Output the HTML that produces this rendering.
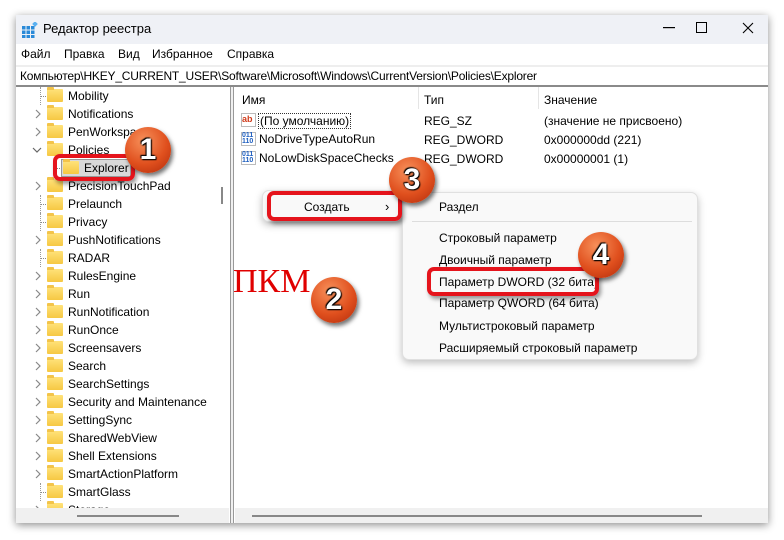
<!DOCTYPE html>
<html><head><meta charset="utf-8"><style>
*{margin:0;padding:0;box-sizing:border-box}
body{width:784px;height:540px;background:#fff;position:relative;overflow:hidden;font-family:"Liberation Sans",sans-serif;font-size:12px;color:#000}
.win{position:absolute;left:16px;top:15px;width:752px;height:508px;background:#fff;box-shadow:0 2px 8px rgba(0,0,0,.45)}
.title{position:absolute;left:0;top:0;width:752px;height:29px;background:#eff1f6}
.title span{position:absolute;left:27px;top:6px;font-size:13px}
.menu{position:absolute;top:29px;left:0;width:752px;height:20px;background:#fff}
.menu span{position:absolute;top:3px}
.addr{position:absolute;top:50px;left:0;width:752px;height:20px;background:#fff;border-top:2px solid #eee;font-size:12px;padding:2px 4px;letter-spacing:-.2px}
.sep{position:absolute;top:70px;left:0;width:752px;height:2px;background:#8a8a8a}
.row{position:absolute;height:18px;left:0;width:213px}
.row .t{position:absolute;left:52px;top:2px}
.fold{position:absolute;left:31px;top:2px;width:16px;height:13px;background:linear-gradient(#ffe27a,#f6c843);border-radius:1px}
.fold:before{content:"";position:absolute;left:0;top:-2px;width:7px;height:3px;background:#f3c44a;border-radius:1px 1px 0 0}
.chev{position:absolute;left:18px;top:4px}
.dot{position:absolute;left:24px;top:9px;width:6px;border-top:1px dotted #888}
.split{position:absolute;left:214px;top:72px;width:4px;height:436px;border-left:1px solid #999;border-right:1px solid #999;background:#f0f0f0}
.right{position:absolute;left:218px;top:72px;width:534px;height:421px;background:#fff}
.bot{position:absolute;top:493px;height:15px;background:#f0f0f0}
.bar{position:absolute;top:7px;height:2px;background:#888}
.badge{position:absolute;width:46px;height:46px;border-radius:50%;background:radial-gradient(circle at 40% 30%,#f7905a,#e0501e 55%,#b02a0a);box-shadow:2px 3px 4px rgba(0,0,0,.55);color:#fff;font:bold 30px "Liberation Sans",sans-serif;text-align:center;line-height:46px;text-shadow:0 0 2px #000,1px 1px 1px #000,-1px -1px 1px #000}
.rbox{position:absolute;border:4px solid #e5141c;border-radius:7px;box-shadow:2px 3px 4px rgba(0,0,0,.4)}
.ctx{position:absolute;background:#f9f9f9;border:1px solid #e0e0e0;border-radius:7px;box-shadow:0 3px 8px rgba(0,0,0,.25)}
#rows{position:absolute;left:0;top:87px;width:229px;height:421px;overflow:hidden}
</style></head><body>
<div class="win">
<div class="title">
<svg style="position:absolute;left:6px;top:7px" width="16" height="16"><g fill="#2a8ad8"><rect x="0" y="4" width="3.5" height="3.5"/><rect x="4.5" y="4" width="3.5" height="3.5"/><rect x="9" y="4" width="3.5" height="3.5"/><rect x="0" y="8.5" width="3.5" height="3.5"/><rect x="4.5" y="8.5" width="3.5" height="3.5"/><rect x="9" y="8.5" width="3.5" height="3.5"/><rect x="0" y="13" width="3.5" height="3"/><rect x="4.5" y="13" width="3.5" height="3"/><rect x="9" y="13" width="3.5" height="3"/></g><rect x="11" y="0" width="4" height="4" fill="#5ab0f0" transform="rotate(45 13 2)"/></svg>
<span>Редактор реестра</span>
<svg style="position:absolute;left:647px;top:12px" width="12" height="2"><rect width="12" height="1.2" fill="#000"/></svg>
<svg style="position:absolute;left:680px;top:7px" width="12" height="12"><rect x=".5" y=".5" width="10" height="10" fill="none" stroke="#000"/></svg>
<svg style="position:absolute;left:726px;top:7px" width="12" height="12"><path d="M1 1L11 11M11 1L1 11" stroke="#000" stroke-width="1.1"/></svg>
</div>
<div class="menu"><span style="left:5px">Файл</span><span style="left:48px">Правка</span><span style="left:102px">Вид</span><span style="left:136px">Избранное</span><span style="left:211px">Справка</span></div>
<div class="addr">Компьютер\HKEY_CURRENT_USER\Software\Microsoft\Windows\CurrentVersion\Policies\Explorer</div>
<div class="sep"></div>
<div class="split"></div>
<div class="right">
<div style="position:absolute;left:8px;top:6px">Имя</div>
<div style="position:absolute;left:184px;top:0;height:22px;border-left:1px solid #e5e5e5"></div>
<div style="position:absolute;left:190px;top:6px">Тип</div>
<div style="position:absolute;left:304px;top:0;height:22px;border-left:1px solid #e5e5e5"></div>
<div style="position:absolute;left:310px;top:6px">Значение</div>
<div style="position:absolute;left:7px;top:26px;width:15px;height:14px;border:1px solid #bbb;color:#d03a1a;font-weight:bold;font-size:9px;line-height:11px">ab</div>
<div style="position:absolute;left:24px;top:26px;border:1px dotted #333;padding:0 1px">(По умолчанию)</div>
<div style="position:absolute;left:7px;top:45px;width:15px;height:14px;border:1px solid #bbb;color:#2060c0;font-weight:bold;font-size:7px;line-height:6px">011<br>110</div>
<div style="position:absolute;left:25px;top:45px">NoDriveTypeAutoRun</div>
<div style="position:absolute;left:7px;top:64px;width:15px;height:14px;border:1px solid #bbb;color:#2060c0;font-weight:bold;font-size:7px;line-height:6px">011<br>110</div>
<div style="position:absolute;left:25px;top:64px">NoLowDiskSpaceChecks</div>
<div style="position:absolute;left:190px;top:27px">REG_SZ</div>
<div style="position:absolute;left:190px;top:46px">REG_DWORD</div>
<div style="position:absolute;left:190px;top:65px">REG_DWORD</div>
<div style="position:absolute;left:310px;top:27px">(значение не присвоено)</div>
<div style="position:absolute;left:310px;top:46px">0x000000dd (221)</div>
<div style="position:absolute;left:310px;top:65px">0x00000001 (1)</div>
</div>
<div class="bot" style="left:0;width:213px"><div class="bar" style="left:61px;width:102px"></div></div>
<div class="bot" style="left:219px;width:533px"><div class="bar" style="left:17px;width:450px"></div></div>
<div style="position:absolute;left:205px;top:172px;width:2px;height:17px;background:#888"></div>
</div>

<div id="rows"></div>
<script>
var names=[["Mobility",0],["Notifications",1],["PenWorkspace",1],["Policies",2],["Explorer",3],["PrecisionTouchPad",1],["Prelaunch",0],["Privacy",0],["PushNotifications",1],["RADAR",0],["RulesEngine",1],["Run",1],["RunNotification",1],["RunOnce",1],["Screensavers",1],["Search",1],["SearchSettings",1],["Security and Maintenance",1],["SettingSync",1],["SharedWebView",1],["Shell Extensions",1],["SmartActionPlatform",1],["SmartGlass",0],["Storage",1]];
var h='';
var cr='<svg class="chev" width="8" height="10"><path d="M2 1L6 5L2 9" fill="none" stroke="#888" stroke-width="1.2"/></svg>';
var cd='<svg class="chev" style="left:16px;top:5px" width="10" height="8"><path d="M1 2L5 6L9 2" fill="none" stroke="#666" stroke-width="1.2"/></svg>';
names.forEach(function(n,i){var y=i*18;var ind=n[1]==3?16:0;
h+='<div class="row" style="left:16px;top:'+y+'px">';
if(n[1]==1)h+=cr;
if(n[1]==2)h+=cd;
if(n[1]==0)h+='<span class="dot"></span><span style="position:absolute;left:24px;top:0;height:18px;border-left:1px dotted #999"></span>';
if(n[1]==3)h+='<span class="dot" style="left:40px"></span><div style="position:absolute;left:45px;top:0;width:70px;height:18px;background:#d9d9d9;border:1px solid #999"></div>';
h+='<span class="fold" style="left:'+(31+ind)+'px"></span><span class="t" style="left:'+(52+ind)+'px">'+n[0]+'</span></div>';});
document.getElementById('rows').innerHTML=h;
</script>

<div class="ctx" style="left:262px;top:190px;width:140px;height:32px"></div>
<div style="position:absolute;left:304px;top:200px">Создать</div>
<div style="position:absolute;left:385px;top:199px;font-size:13px">&#x203A;</div>
<div class="ctx" style="left:402px;top:192px;width:296px;height:168px"></div>
<div style="position:absolute;left:412px;top:221px;width:280px;border-top:1px solid #ddd"></div>
<div style="position:absolute;left:439px;top:200px">Раздел</div>
<div style="position:absolute;left:439px;top:231px">Строковый параметр</div>
<div style="position:absolute;left:439px;top:253px">Двоичный параметр</div>
<div style="position:absolute;left:439px;top:275px">Параметр DWORD (32 бита)</div>
<div style="position:absolute;left:439px;top:296px">Параметр QWORD (64 бита)</div>
<div style="position:absolute;left:439px;top:319px">Мультистроковый параметр</div>
<div style="position:absolute;left:439px;top:341px">Расширяемый строковый параметр</div>

<div class="rbox" style="left:53px;top:154px;width:82px;height:27px"></div>
<div class="rbox" style="left:267px;top:191px;width:135px;height:30px"></div>
<div class="rbox" style="left:427px;top:267px;width:172px;height:29px"></div>
<div style="position:absolute;left:233px;top:263px;color:#e00000;font:34px 'Liberation Serif',serif">ПКМ</div>
<div class="badge" style="left:125px;top:127px">1</div>
<div class="badge" style="left:311px;top:277px">2</div>
<div class="badge" style="left:389px;top:157px">3</div>
<div class="badge" style="left:578px;top:232px">4</div>
</body></html>
